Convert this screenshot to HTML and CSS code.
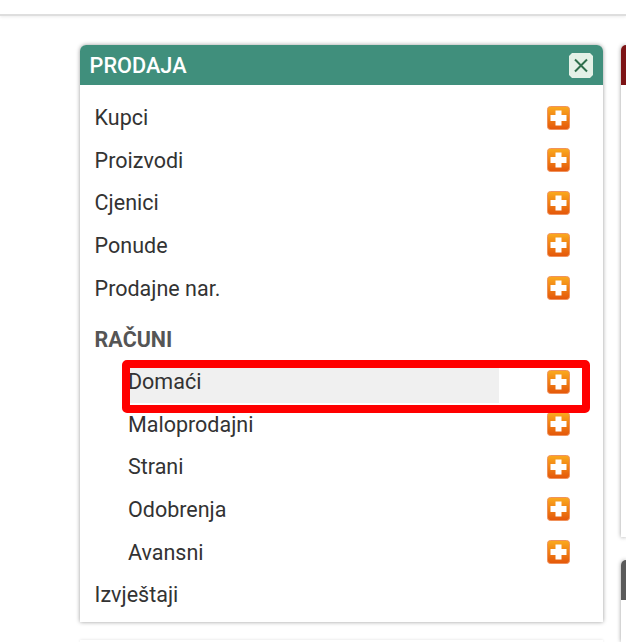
FILE: index.html
```html
<!DOCTYPE html>
<html>
<head>
  <title>Prodaja</title>
  <link rel="stylesheet" href="styles.css">
</head>
<body>
  <svg class="icon-defs" width="0" height="0">
    <defs>
      <linearGradient id="plusFill" x1="0" y1="0" x2="0" y2="1">
        <stop offset="0" stop-color="#fbaa1e"/>
        <stop offset="1" stop-color="#e4560a"/>
      </linearGradient>
      <symbol id="plus" viewBox="0 0 23 24">
        <rect x="0.5" y="0.5" width="22" height="23" rx="3" fill="url(#plusFill)" stroke="#f0925c"/>
        <path d="M8.5 4.5h6V9h5v6h-5v4.5h-6V15h-5V9h5z" fill="#fff"/>
      </symbol>
    </defs>
  </svg>

  <div class="top-bar"></div>

  <div class="dashboard">
    <div class="main-column">
      <div class="panel">
        <div class="panel-header">
          <span class="panel-title">PRODAJA</span>
          <button class="close-button">
            <svg class="close-icon" width="24" height="25" viewBox="0 0 24 25">
              <path d="M3 0h18l3 3v19l-3 3H3l-3-3V3z" fill="#e4f1e7"/>
              <path d="M6 6.5l12 12M18 6.5l-12 12" stroke="#2f6f4c" stroke-width="2" fill="none"/>
            </svg>
          </button>
        </div>
        <div class="panel-body">
          <div class="menu-row"><span>Kupci</span><svg class="plus-icon"><use href="#plus"/></svg></div>
          <div class="menu-row"><span>Proizvodi</span><svg class="plus-icon"><use href="#plus"/></svg></div>
          <div class="menu-row"><span>Cjenici</span><svg class="plus-icon"><use href="#plus"/></svg></div>
          <div class="menu-row"><span>Ponude</span><svg class="plus-icon"><use href="#plus"/></svg></div>
          <div class="menu-row"><span>Prodajne nar.</span><svg class="plus-icon"><use href="#plus"/></svg></div>

          <div class="menu-group">RAČUNI</div>
          <div class="menu-row sub-row active"><span>Domaći</span><svg class="plus-icon"><use href="#plus"/></svg></div>
          <div class="menu-row sub-row"><span>Maloprodajni</span><svg class="plus-icon"><use href="#plus"/></svg></div>
          <div class="menu-row sub-row"><span>Strani</span><svg class="plus-icon"><use href="#plus"/></svg></div>
          <div class="menu-row sub-row"><span>Odobrenja</span><svg class="plus-icon"><use href="#plus"/></svg></div>
          <div class="menu-row sub-row"><span>Avansni</span><svg class="plus-icon"><use href="#plus"/></svg></div>

          <div class="menu-row"><span>Izvještaji</span></div>
        </div>
        <div class="highlight-box"></div>
      </div>
      <div class="panel-next"></div>
    </div>

    <div class="side-column">
      <div class="side-panel side-red"><div class="side-header"></div></div>
      <div class="side-panel side-grey"><div class="side-header"></div></div>
    </div>
  </div>
</body>
</html>
```

FILE: styles.css
```css
html, body {
  height: 100%;
}

body {
  font-family: Roboto, "Liberation Sans", sans-serif;
  background-color: #fff;
  color: #333;
  margin: 0;
  padding: 0;
  overflow: hidden;
}

.icon-defs {
  display: block;
  height: 0;
}

.top-bar {
  height: 14px;
  background-color: #fff;
  border-bottom: 2px solid #dedede;
  box-shadow: 0 1px 3px rgba(0, 0, 0, 0.08);
}

.dashboard {
  display: flex;
  gap: 18px;
  box-sizing: border-box;
  height: calc(100% - 16px);
  padding: 29px 0 0 80px;
  overflow: hidden;
}

.main-column {
  display: flex;
  flex-direction: column;
  gap: 18px;
  flex-shrink: 0;
  width: 523px;
}

.panel {
  position: relative;
  flex-shrink: 0;
  height: 577px;
  background-color: #fff;
  border-radius: 6px 6px 0 0;
  box-shadow: 0 0 4px rgba(0, 0, 0, 0.4);
}

.panel-next {
  flex-grow: 1;
  background-color: #fff;
  box-shadow: 0 0 3px rgba(0, 0, 0, 0.15);
}

.panel-header {
  display: flex;
  align-items: center;
  justify-content: space-between;
  height: 40px;
  padding: 0 10px 0 9.6px;
  background-color: #408f7c;
  border-radius: 6px 6px 0 0;
}

.panel-title {
  font-size: 21.7px;
  font-weight: 500;
  color: #fff;
}

.close-button {
  display: flex;
  padding: 0;
  background: none;
  border: none;
  cursor: pointer;
}

.close-icon {
  filter: blur(0.3px);
}

.panel-body {
  padding: 11.4px 33.5px 0 14.6px;
}

.menu-row {
  display: flex;
  align-items: center;
  justify-content: space-between;
  height: 42.6px;
  font-size: 21.5px;
}

.plus-icon {
  width: 23px;
  height: 24px;
  filter: blur(0.4px);
}

.menu-group {
  height: 42px;
  margin-top: 9px;
  line-height: 44px;
  font-size: 21.5px;
  font-weight: 700;
  color: #555;
}

.sub-row {
  padding-left: 33.4px;
}

.active {
  background: linear-gradient(#f0f0f0, #f0f0f0) no-repeat 34px 7px / 370px 37px;
}

.highlight-box {
  position: absolute;
  left: 42px;
  top: 315px;
  width: 452px;
  height: 37px;
  border: 8px solid #f00;
  border-radius: 5px;
}

.side-column {
  display: flex;
  flex-direction: column;
  gap: 23px;
  flex-grow: 1;
  min-width: 0;
}

.side-panel {
  background-color: #fff;
  border-radius: 6px 0 0 0;
  box-shadow: 0 0 4px rgba(0, 0, 0, 0.4);
}

.side-red {
  flex-shrink: 0;
  height: 492px;
}

.side-grey {
  flex-grow: 1;
}

.side-header {
  height: 40px;
  border-radius: 6px 0 0 0;
}

.side-red .side-header {
  background-color: #7d1416;
}

.side-grey .side-header {
  background-color: #5a5a5a;
}
```
